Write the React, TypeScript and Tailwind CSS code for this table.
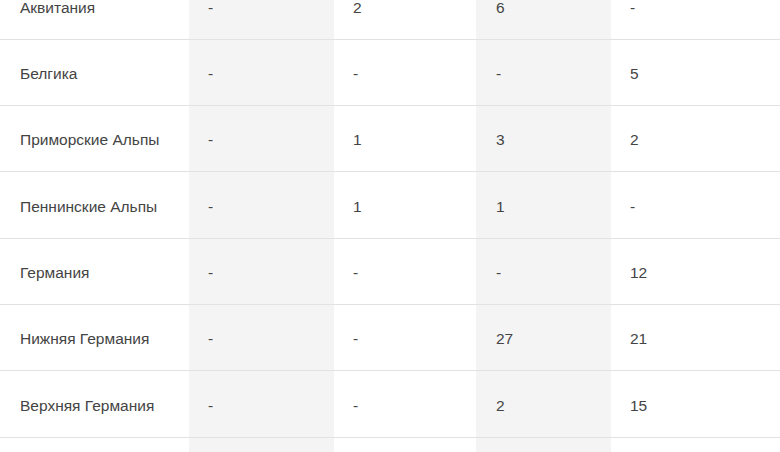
const rows: Array<[string, string, string, string, string]> = [
  ["Аквитания", "-", "2", "6", "-"],
  ["Белгика", "-", "-", "-", "5"],
  ["Приморские Альпы", "-", "1", "3", "2"],
  ["Пеннинские Альпы", "-", "1", "1", "-"],
  ["Германия", "-", "-", "-", "12"],
  ["Нижняя Германия", "-", "-", "27", "21"],
  ["Верхняя Германия", "-", "-", "2", "15"],
  ["", "", "", "", ""],
];

export default function App() {
  return (
    <div className="w-[780px] h-[452px] overflow-hidden bg-white text-[15.5px] text-[#444] font-['Liberation_Sans',Arial,sans-serif]">
      <div className="-mt-[26.5px]">
        {rows.map((r, i) => (
          <div
            key={i}
            className="grid grid-cols-[189px_145px_142px_135px_1fr] h-[66.33px] border-b border-[#e2e2e2]"
          >
            <div className="flex items-center pl-[20px] pt-[2px]">{r[0]}</div>
            <div className="flex items-center pl-[19px] pt-[2px] bg-[#f4f4f4]">{r[1]}</div>
            <div className="flex items-center pl-[19px] pt-[2px]">{r[2]}</div>
            <div className="flex items-center pl-[20px] pt-[2px] bg-[#f4f4f4]">{r[3]}</div>
            <div className="flex items-center pl-[19px] pt-[2px]">{r[4]}</div>
          </div>
        ))}
      </div>
    </div>
  );
}
